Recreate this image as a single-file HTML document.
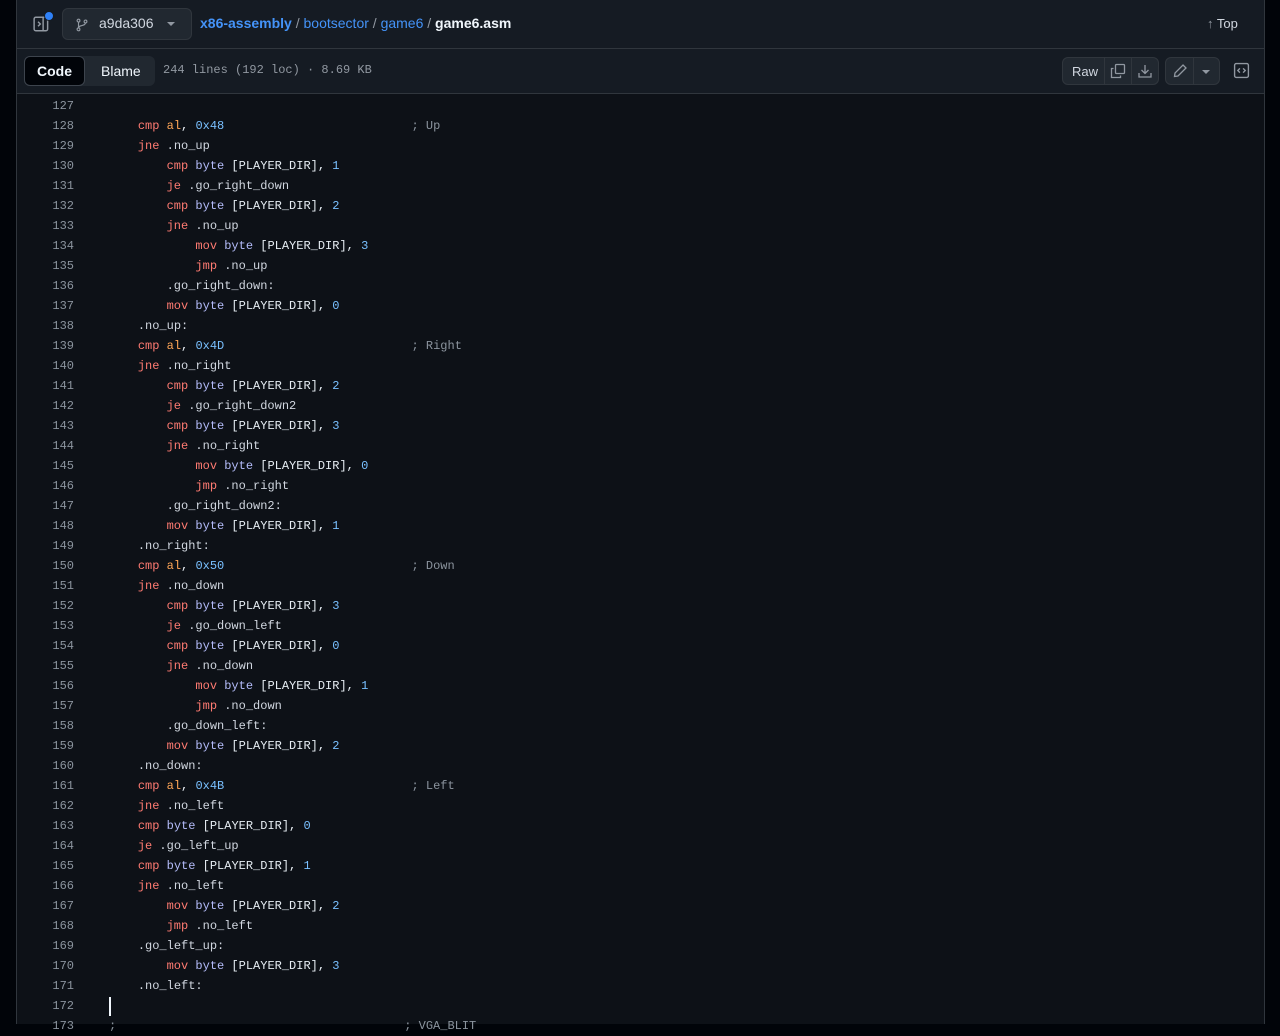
<!DOCTYPE html>
<html><head><meta charset="utf-8"><style>
body{margin:0;width:1280px;height:1024px;background:#010409;overflow:hidden;font-family:"Liberation Sans",sans-serif;position:relative}
.panel{position:absolute;left:16px;top:0;width:1247px;height:1024px;background:#0d1117;border-left:1px solid #30363d;border-right:1px solid #30363d}
.hdr{position:absolute;left:0;top:0;right:0;height:48px;background:#151b23;border-bottom:1px solid #30363d}
.tb{position:absolute;left:0;top:49px;right:0;height:44px;background:#151b23;border-bottom:1px solid #30363d}
.btn{position:absolute;border:1px solid #30363d;border-radius:6px;background:#212830;box-sizing:border-box}
.code{position:absolute;left:0;top:96px;font-family:"Liberation Mono",monospace;font-size:12px;color:#e6edf3}
.l{height:20px;line-height:20px;white-space:pre;position:relative}
.ln{display:inline-block;width:57px;text-align:right;color:#8b949e;margin-right:35px}
.k{color:#ff7b72}.r{color:#ffa657}.n{color:#79c0ff}.b{color:#b4bcfa}.c{color:#8b949e}
.t{color:#d1d7e0}
</style></head><body>
<div class="panel">
 <div class="hdr">
  <svg style="position:absolute;left:16px;top:15px" width="18" height="18" viewBox="0 0 16 16" fill="none" stroke="#9198a1" stroke-width="1.3"><rect x="1" y="2" width="12" height="12" rx="1.5"/><line x1="9" y1="2" x2="9" y2="14"/><path d="M4.5 6l2 2-2 2" /></svg>
  <div style="position:absolute;left:27px;top:11px;width:8px;height:8px;border-radius:50%;background:#2f81f7;border:1px solid #151b23"></div>
  <div class="btn" style="left:45px;top:8px;width:130px;height:32px;background:#212830">
   <svg style="position:absolute;left:12px;top:8px" width="14" height="16" viewBox="0 0 16 16" fill="none" stroke="#9198a1" stroke-width="1.3"><circle cx="4" cy="3" r="1.6"/><circle cx="4" cy="13" r="1.6"/><circle cx="12" cy="4" r="1.6"/><path d="M4 4.6v6.8M12 5.6c0 4-8 2-8 5.8"/></svg>
   <span style="position:absolute;left:36px;top:6px;font-size:14px;color:#d1d7e0">a9da306</span>
   <span style="position:absolute;left:104px;top:13px;border:4px solid transparent;border-top:4px solid #9198a1"></span>
  </div>
  <div style="position:absolute;left:183px;top:15px;font-size:14px;color:#9198a1"><span style="color:#4493f8;font-weight:bold">x86-assembly</span> / <span style="color:#4493f8">bootsector</span> / <span style="color:#4493f8">game6</span> / <span style="color:#f0f6fc;font-weight:bold">game6.asm</span></div>
  <div style="position:absolute;left:1190px;top:16px;font-size:13px;color:#d1d7e0"><span style="color:#9198a1">↑</span> Top</div>
 </div>
 <div class="tb">
  <div style="position:absolute;left:7px;top:7px;width:131px;height:30px;border-radius:6px;background:#212830"></div>
  <div style="position:absolute;left:7px;top:7px;width:61px;height:30px;border-radius:6px;background:#010409;border:1px solid #3d444d;box-sizing:border-box;color:#f0f6fc;font-weight:bold;font-size:14px;text-align:center;line-height:28px">Code</div>
  <div style="position:absolute;left:84px;top:14px;font-size:14px;color:#f0f6fc">Blame</div>
  <div style="position:absolute;left:146px;top:14px;font-family:'Liberation Mono',monospace;font-size:12px;color:#9198a1">244 lines (192 loc) · 8.69 KB</div>
  <div class="btn" style="left:1045px;top:8px;width:97px;height:28px">
   <span style="position:absolute;left:9px;top:6px;font-size:13px;color:#d1d7e0">Raw</span>
   <div style="position:absolute;left:41px;top:0;width:1px;height:26px;background:#30363d"></div>
   <div style="position:absolute;left:68px;top:0;width:1px;height:26px;background:#30363d"></div>
   <svg style="position:absolute;left:47px;top:5px" width="16" height="16" viewBox="0 0 16 16" fill="none" stroke="#9198a1" stroke-width="1.3"><rect x="5.5" y="1.5" width="9" height="9" rx="1"/><path d="M3.5 5.5h-2v9h9v-2"/></svg>
   <svg style="position:absolute;left:74px;top:5px" width="16" height="16" viewBox="0 0 16 16" fill="none" stroke="#9198a1" stroke-width="1.3"><path d="M8 2v8M4.5 7L8 10.5 11.5 7M2 10v4h12v-4"/></svg>
  </div>
  <div class="btn" style="left:1148px;top:8px;width:55px;height:28px">
   <div style="position:absolute;left:27px;top:0;width:1px;height:26px;background:#30363d"></div>
   <svg style="position:absolute;left:6px;top:5px" width="16" height="16" viewBox="0 0 16 16" fill="none" stroke="#9198a1" stroke-width="1.3"><path d="M11 2l3 3-8 8-3.5.5.5-3.5z"/></svg>
   <span style="position:absolute;left:36px;top:12px;border:4px solid transparent;border-top:4px solid #9198a1"></span>
  </div>
  <svg style="position:absolute;left:1216px;top:13px" width="17" height="17" viewBox="0 0 16 16" fill="none" stroke="#9198a1" stroke-width="1.3"><rect x="1.5" y="1.5" width="13" height="13" rx="1.5"/><path d="M6.5 6L4.5 8l2 2M9.5 6l2 2-2 2"/></svg>
 </div>
 <div class="code">
<div class="l"><span class="ln">127</span></div>
<div class="l"><span class="ln">128</span>    <span class="k">cmp</span> <span class="r">al</span>, <span class="n">0x48</span>                          <span class="c">; Up</span></div>
<div class="l"><span class="ln">129</span>    <span class="k">jne</span> <span class="t">.no_up</span></div>
<div class="l"><span class="ln">130</span>        <span class="k">cmp</span> <span class="b">byte</span> [PLAYER_DIR], <span class="n">1</span></div>
<div class="l"><span class="ln">131</span>        <span class="k">je</span> <span class="t">.go_right_down</span></div>
<div class="l"><span class="ln">132</span>        <span class="k">cmp</span> <span class="b">byte</span> [PLAYER_DIR], <span class="n">2</span></div>
<div class="l"><span class="ln">133</span>        <span class="k">jne</span> <span class="t">.no_up</span></div>
<div class="l"><span class="ln">134</span>            <span class="k">mov</span> <span class="b">byte</span> [PLAYER_DIR], <span class="n">3</span></div>
<div class="l"><span class="ln">135</span>            <span class="k">jmp</span> <span class="t">.no_up</span></div>
<div class="l"><span class="ln">136</span>        <span class="t">.go_right_down:</span></div>
<div class="l"><span class="ln">137</span>        <span class="k">mov</span> <span class="b">byte</span> [PLAYER_DIR], <span class="n">0</span></div>
<div class="l"><span class="ln">138</span>    <span class="t">.no_up:</span></div>
<div class="l"><span class="ln">139</span>    <span class="k">cmp</span> <span class="r">al</span>, <span class="n">0x4D</span>                          <span class="c">; Right</span></div>
<div class="l"><span class="ln">140</span>    <span class="k">jne</span> <span class="t">.no_right</span></div>
<div class="l"><span class="ln">141</span>        <span class="k">cmp</span> <span class="b">byte</span> [PLAYER_DIR], <span class="n">2</span></div>
<div class="l"><span class="ln">142</span>        <span class="k">je</span> <span class="t">.go_right_down2</span></div>
<div class="l"><span class="ln">143</span>        <span class="k">cmp</span> <span class="b">byte</span> [PLAYER_DIR], <span class="n">3</span></div>
<div class="l"><span class="ln">144</span>        <span class="k">jne</span> <span class="t">.no_right</span></div>
<div class="l"><span class="ln">145</span>            <span class="k">mov</span> <span class="b">byte</span> [PLAYER_DIR], <span class="n">0</span></div>
<div class="l"><span class="ln">146</span>            <span class="k">jmp</span> <span class="t">.no_right</span></div>
<div class="l"><span class="ln">147</span>        <span class="t">.go_right_down2:</span></div>
<div class="l"><span class="ln">148</span>        <span class="k">mov</span> <span class="b">byte</span> [PLAYER_DIR], <span class="n">1</span></div>
<div class="l"><span class="ln">149</span>    <span class="t">.no_right:</span></div>
<div class="l"><span class="ln">150</span>    <span class="k">cmp</span> <span class="r">al</span>, <span class="n">0x50</span>                          <span class="c">; Down</span></div>
<div class="l"><span class="ln">151</span>    <span class="k">jne</span> <span class="t">.no_down</span></div>
<div class="l"><span class="ln">152</span>        <span class="k">cmp</span> <span class="b">byte</span> [PLAYER_DIR], <span class="n">3</span></div>
<div class="l"><span class="ln">153</span>        <span class="k">je</span> <span class="t">.go_down_left</span></div>
<div class="l"><span class="ln">154</span>        <span class="k">cmp</span> <span class="b">byte</span> [PLAYER_DIR], <span class="n">0</span></div>
<div class="l"><span class="ln">155</span>        <span class="k">jne</span> <span class="t">.no_down</span></div>
<div class="l"><span class="ln">156</span>            <span class="k">mov</span> <span class="b">byte</span> [PLAYER_DIR], <span class="n">1</span></div>
<div class="l"><span class="ln">157</span>            <span class="k">jmp</span> <span class="t">.no_down</span></div>
<div class="l"><span class="ln">158</span>        <span class="t">.go_down_left:</span></div>
<div class="l"><span class="ln">159</span>        <span class="k">mov</span> <span class="b">byte</span> [PLAYER_DIR], <span class="n">2</span></div>
<div class="l"><span class="ln">160</span>    <span class="t">.no_down:</span></div>
<div class="l"><span class="ln">161</span>    <span class="k">cmp</span> <span class="r">al</span>, <span class="n">0x4B</span>                          <span class="c">; Left</span></div>
<div class="l"><span class="ln">162</span>    <span class="k">jne</span> <span class="t">.no_left</span></div>
<div class="l"><span class="ln">163</span>    <span class="k">cmp</span> <span class="b">byte</span> [PLAYER_DIR], <span class="n">0</span></div>
<div class="l"><span class="ln">164</span>    <span class="k">je</span> <span class="t">.go_left_up</span></div>
<div class="l"><span class="ln">165</span>    <span class="k">cmp</span> <span class="b">byte</span> [PLAYER_DIR], <span class="n">1</span></div>
<div class="l"><span class="ln">166</span>    <span class="k">jne</span> <span class="t">.no_left</span></div>
<div class="l"><span class="ln">167</span>        <span class="k">mov</span> <span class="b">byte</span> [PLAYER_DIR], <span class="n">2</span></div>
<div class="l"><span class="ln">168</span>        <span class="k">jmp</span> <span class="t">.no_left</span></div>
<div class="l"><span class="ln">169</span>    <span class="t">.go_left_up:</span></div>
<div class="l"><span class="ln">170</span>        <span class="k">mov</span> <span class="b">byte</span> [PLAYER_DIR], <span class="n">3</span></div>
<div class="l"><span class="ln">171</span>    <span class="t">.no_left:</span></div>
<div class="l"><span class="ln">172</span><span style="position:absolute;left:92px;top:1px;width:2px;height:19px;background:#f0f6fc"></span></div>
<div class="l"><span class="ln">173</span><span class="c">;                                        ; VGA_BLIT</span></div>
 </div>
</div>
</body></html>
